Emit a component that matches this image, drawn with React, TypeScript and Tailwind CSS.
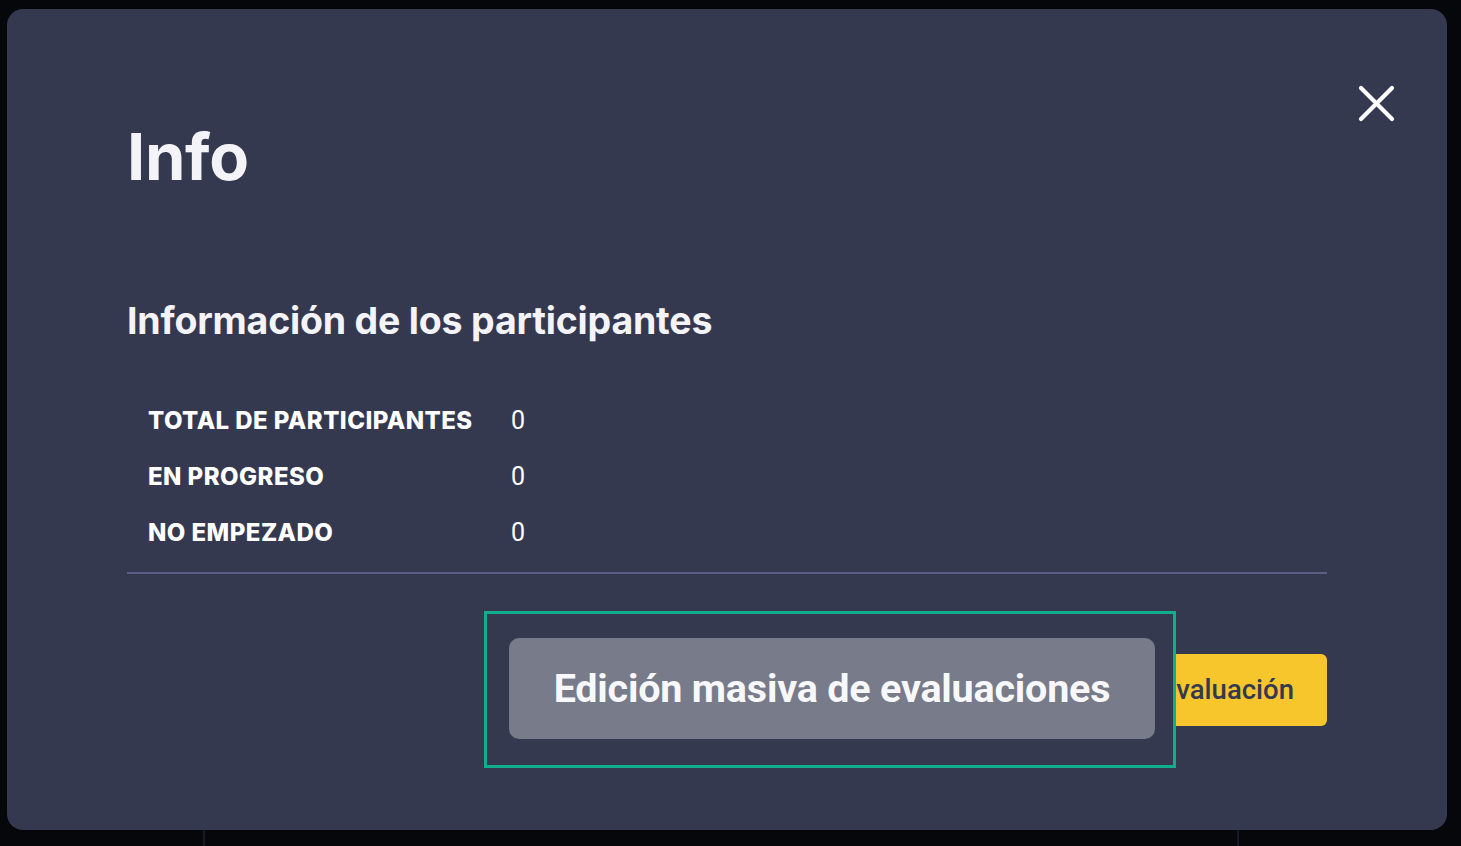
const rows = [
  { label: "TOTAL DE PARTICIPANTES", value: "0" },
  { label: "EN PROGRESO", value: "0" },
  { label: "NO EMPEZADO", value: "0" },
];

export default function App() {
  return (
    <div className="relative h-[846px] w-full overflow-hidden bg-[#06070b] font-['Inter',sans-serif]">
      {/* page behind the dialog */}
      <div className="ml-[203px] mt-[760px] h-[86px] w-[1036px] border-x-2 border-[#141a2a]" />

      {/* Dialog */}
      <div className="absolute left-[7px] top-[9px] h-[821px] w-[1440px] rounded-[16px] bg-[#353950] px-[120px] pt-[115px]">
        <button className="absolute right-[52px] top-[76px] text-white">
          <svg width="37" height="37" viewBox="0 0 37 37" fill="none" stroke="currentColor" strokeWidth="4.2" strokeLinecap="round">
            <path d="M3 3 L34 34 M34 3 L3 34" />
          </svg>
        </button>

        <h1 className="text-[65px] font-bold leading-none tracking-[-0.3px] text-[#f4f4f8]">Info</h1>

        <h2 className="mt-[112px] text-[37.5px] font-bold leading-[40px] tracking-[-0.2px] text-[#f4f4f8]">
          Información de los participantes
        </h2>

        <div className="mt-[52px] pl-[21px]">
          {rows.map((r) => (
            <div key={r.label} className="flex h-[56px] items-center">
              <span className="w-[363px] text-[24px] font-extrabold tracking-[0.45px] text-white">{r.label}</span>
              <span className="font-['Roboto',sans-serif] text-[25px] text-white">{r.value}</span>
            </div>
          ))}
        </div>

        <div className="mt-[11px] h-[2px] bg-[#5a5e84]" />

        <div className="mt-[80px] flex justify-end gap-4">
          <button className="h-[72px] rounded-[6px] bg-[#f6c62c] px-[33px] font-['Roboto',sans-serif] text-[27.5px] font-medium text-[#353950]">
            Nueva evaluación
          </button>
        </div>

        {/* highlighted callout */}
        <div className="absolute left-[477px] top-[602px] h-[157px] w-[692px] border-[3px] border-[#12ae8c] bg-[#353950] px-[22px] pt-[24px]">
          <div className="flex h-[101px] w-[646px] items-center justify-center rounded-[10px] bg-[#777b8a] font-['Roboto',sans-serif] text-[39.5px] font-bold tracking-[-0.2px] text-[#f8f8fa]">
            Edición masiva de evaluaciones
          </div>
        </div>
      </div>
    </div>
  );
}
